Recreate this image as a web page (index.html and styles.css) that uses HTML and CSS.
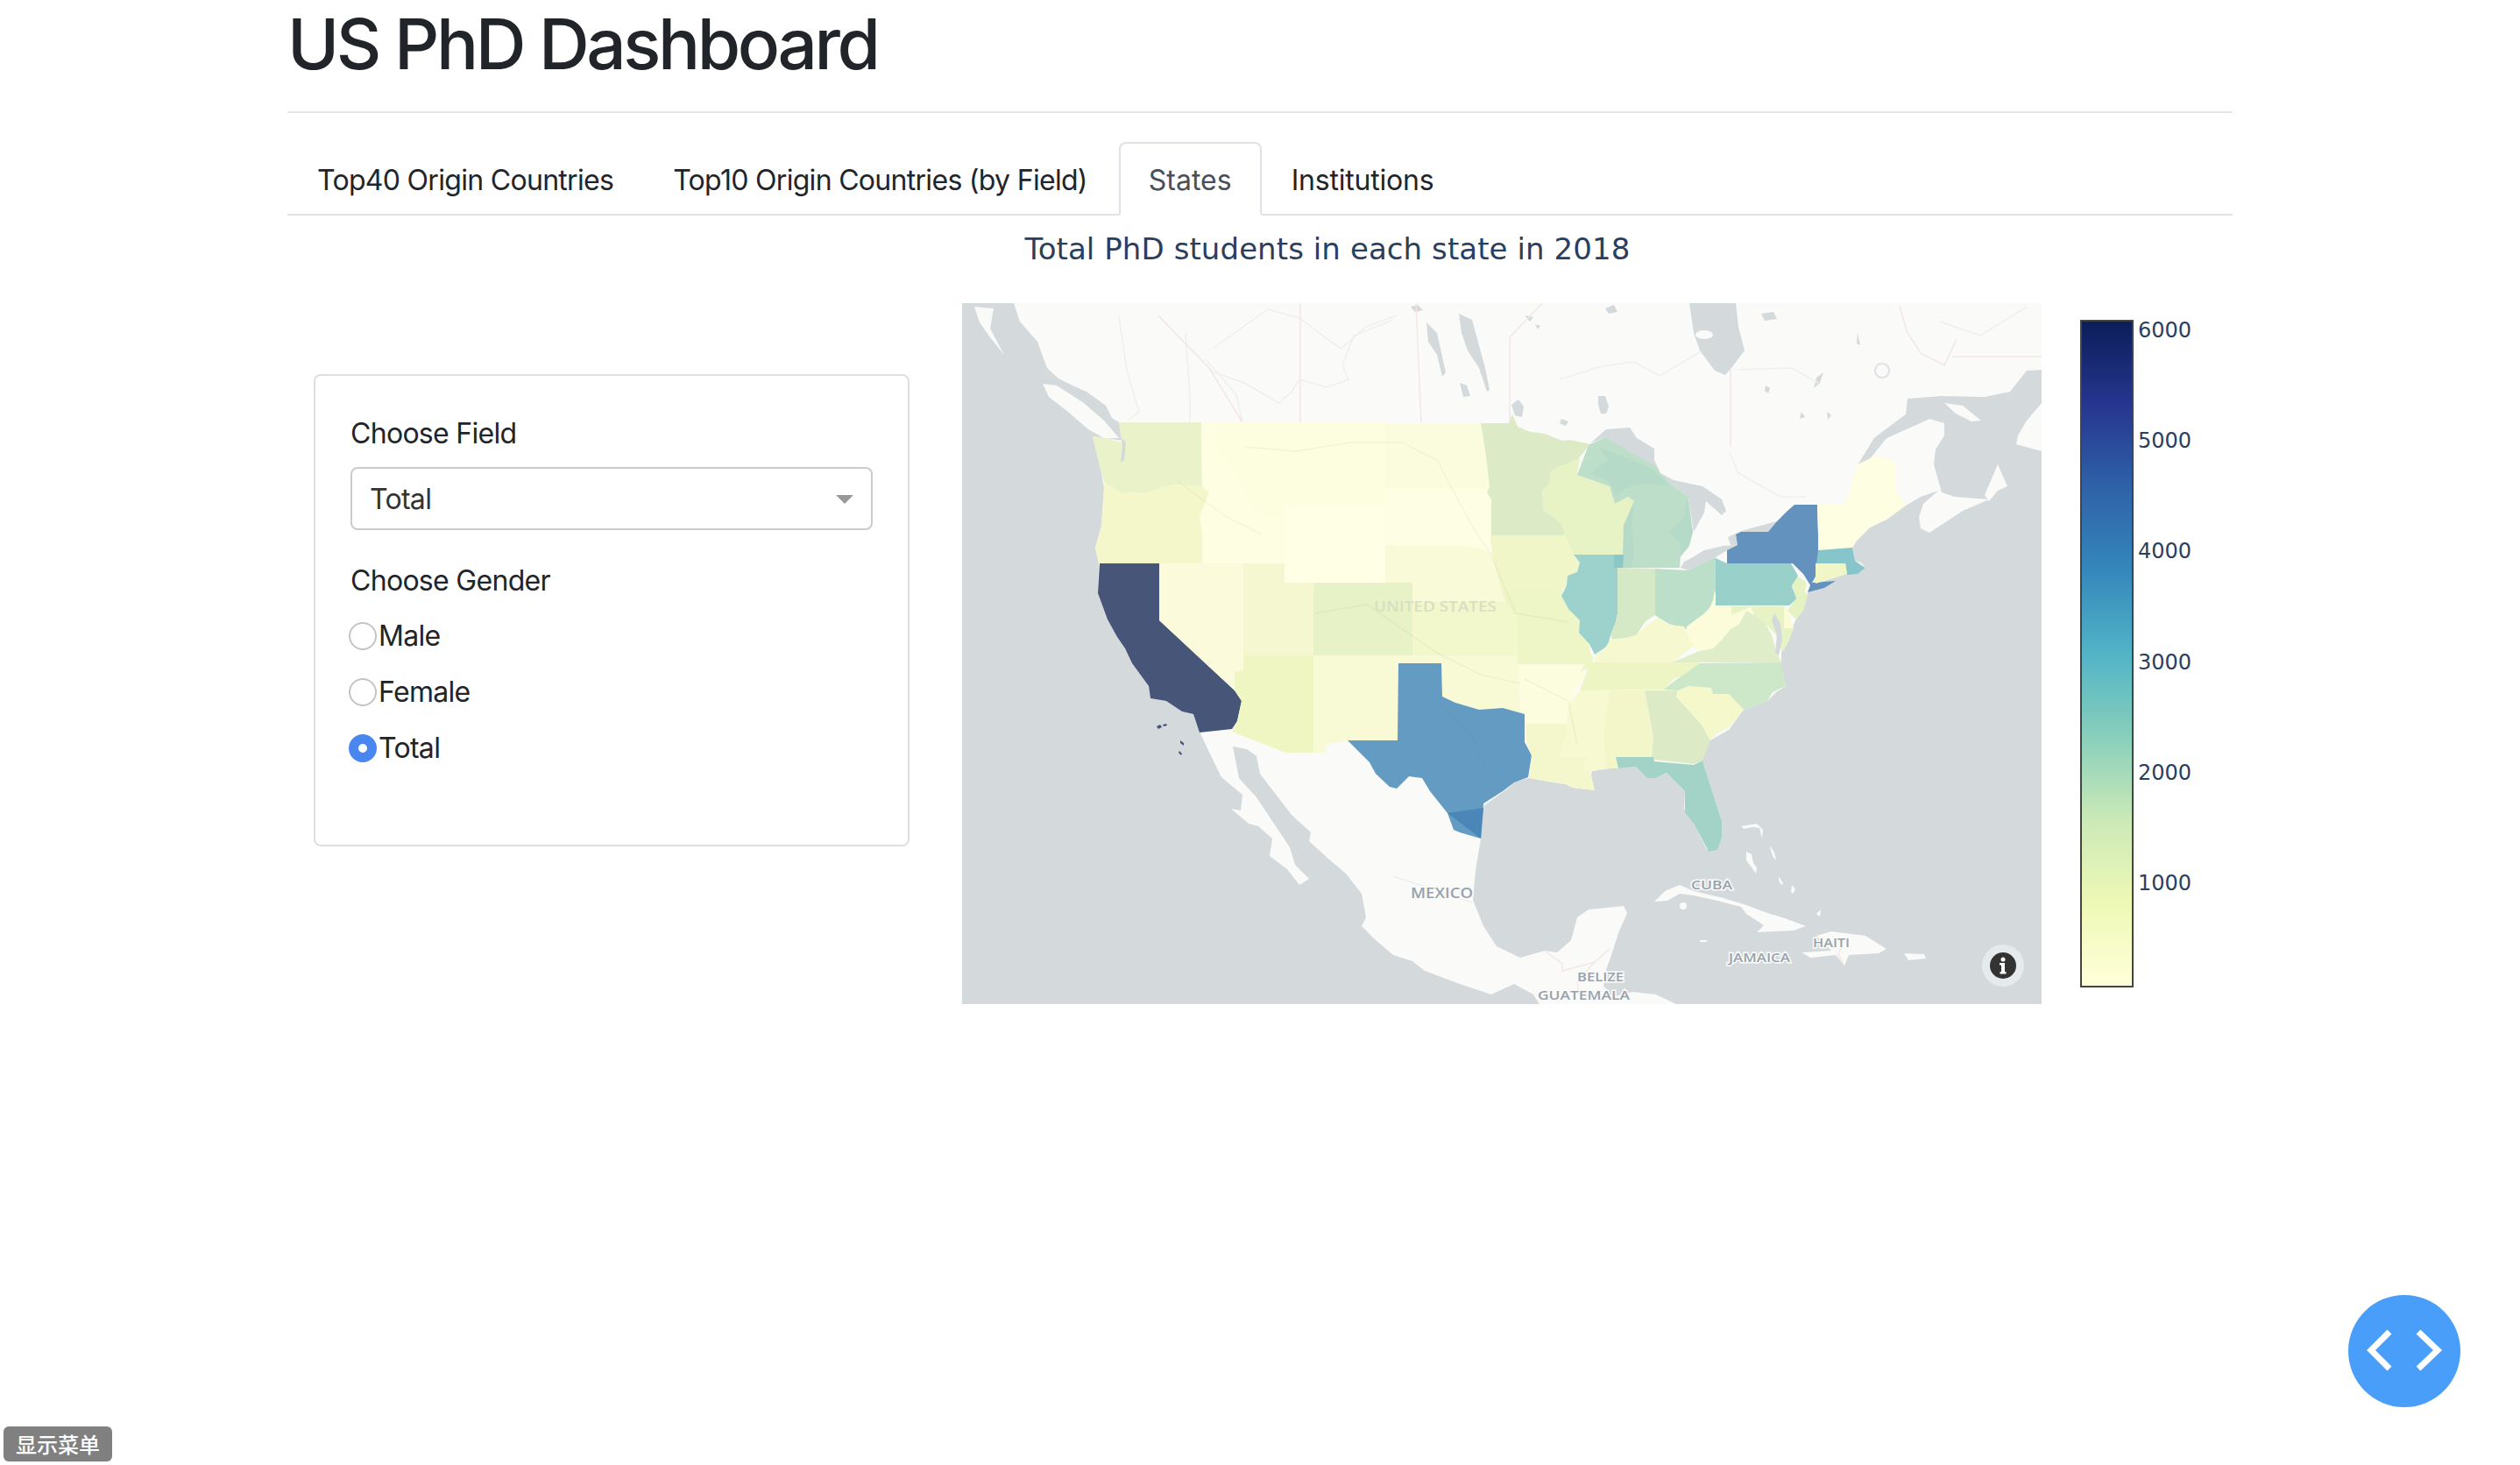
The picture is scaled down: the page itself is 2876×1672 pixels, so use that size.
FILE: index.html
```html
<!DOCTYPE html>
<html lang="en">
<head>
    <meta charset="UTF-8">
    <title>US PhD Dashboard</title>
    <link rel="stylesheet" href="styles.css">
</head>
<body>
    <div class="container">
        <h1 class="page-title">US PhD Dashboard</h1>
        <hr class="rule">

        <ul class="tabs">
            <li class="tab">Top40 Origin Countries</li>
            <li class="tab">Top10 Origin Countries (by Field)</li>
            <li class="tab active">States</li>
            <li class="tab last">Institutions</li>
        </ul>

        <div class="chart-title">Total PhD students in each state in 2018</div>

        <div class="states-row">
            <div class="card">
                <div class="card-label">Choose Field</div>
                <div class="select">
                    <span>Total</span>
                    <span class="select-arrow"></span>
                </div>
                <div class="card-label gender-label">Choose Gender</div>
                <label class="radio-row"><input type="radio" name="gender">Male</label>
                <label class="radio-row"><input type="radio" name="gender">Female</label>
                <label class="radio-row"><input type="radio" name="gender" checked>Total</label>
            </div>

            <svg class="map" viewBox="1098 346 1232 800" xmlns="http://www.w3.org/2000/svg">
                <rect class="water" x="1098" y="346" width="1232" height="800"/>

                <!-- land -->
                <g class="land">
                    <path d="M1157 346L1164 367 1184 390 1195 420 1208 432 1224 440 1240 447 1262 463 1269 477 1277 482 1282 503 1262 500 1247 498 1257 540 1260 557 1257 600 1250 625 1254 643 1253 677 1264 707 1275 727 1284 740 1292 757 1311 783 1313 797 1331 800 1349 812 1362 815 1369 835 1376 850 1387 873 1394 887 1418 907 1416 925 1405 923 1425 940 1436 943 1452 957 1449 977 1469 992 1483 1010 1494 1003 1478 987 1472 967 1456 943 1434 910 1414 888 1407 852 1423 855 1434 863 1438 883 1474 930 1496 950 1494 960 1516 980 1536 997 1554 1020 1559 1047 1554 1057 1570 1073 1590 1090 1612 1097 1626 1108 1666 1123 1702 1135 1728 1123 1750 1135 1757 1146 1913 1146 1890 1135 1863 1132 1840 1138 1830 1125 1833 1107 1840 1087 1847 1065 1857 1042 1853 1034 1813 1038 1800 1047 1793 1073 1777 1087 1763 1085 1735 1093 1708 1080 1693 1057 1681 1027 1684 993 1690 957 1690 930 1693 920 1707 910 1723 898 1728 892 1745 888 1767 892 1787 895 1795 899 1820 902 1815 888 1817 880 1837 877 1847 877 1867 875 1880 888 1890 888 1902 882 1923 903 1922 923 1933 940 1948 970 1960 970 1965 957 1965 937 1953 900 1943 868 1945 853 1952 845 1973 833 1990 810 2017 800 2027 790 2038 783 2033 757 2033 743 2047 713 2063 677 2072 666 2098 658 2108 655 2120 655 2129 648 2124 642 2117 640 2114 625 2119 617 2134 602 2153 593 2175 577 2192 567 2212 560 2195 575 2190 590 2192 603 2202 608 2240 583 2270 570 2231 567 2216 562 2207 530 2209 513 2219 497 2219 483 2202 478 2153 500 2119 533 2139 500 2175 473 2177 455 2216 452 2265 453 2294 447 2313 423 2330 422 2330 346Z"/>
                    <path d="M1112 350L1134 352 1130 375 1146 405 1130 385 1118 368Z"/>
                    <path d="M1190 438L1206 440 1237 460 1260 480 1277 500 1260 500 1242 490 1219 470 1197 453Z"/>
                    <path d="M2330 515L2301 507 2303 497 2313 480 2330 460Z"/>
                    <path d="M2265 565L2280 530 2291 555 2280 560 2270 572Z"/>
                    <path d="M2219 460L2240 463 2261 480 2250 481 2232 472Z"/>
                    <path d="M1888 1029L1900 1017 1917 1010 1933 1017 1967 1025 1993 1033 2017 1042 2037 1048 2061 1057 2047 1062 2005 1064 2013 1056 1993 1043 1987 1035 1960 1028 1933 1022 1917 1020 1903 1028Z"/>
                    <ellipse cx="1921" cy="1034" rx="4" ry="4"/>
                    <path d="M2056 1087L2090 1085 2073 1068 2090 1063 2129 1068 2153 1083 2144 1088 2110 1090 2105 1102 2095 1090 2066 1093Z"/>
                    <path d="M2173 1088L2196 1089 2198 1094 2178 1096Z"/>
                    <path d="M1993 972L1999 975 2001 985 2005 990 2004 997 1999 990 1993 982Z"/>
                    <path d="M1987 943L2005 940 2012 947 2011 957 2008 945 2000 944 1990 946Z"/>
                    <path d="M1940 1073h8v2h-8z"/>
                    <path d="M2073 1043L2078 1038 2077 1046Z"/>
                    <path d="M2020 965l5 8 2 8-3-2-3-8zM2045 1010l4 5-3 5-2-2zM2030 1000l5 8-2 2-3-5z"/>
                </g>

                <!-- lakes, bays and rivers mouths -->
                <g class="water">
                    <path d="M1928 346L1981 346 1984 373 1991 400 1976 420 1969 428 1957 423 1940 400 1933 380Z"/>
                    <path d="M1815 506L1833 490 1860 488 1868 500 1888 512 1888 525 1895 540 1860 520 1832 499Z"/>
                    <path d="M1895 540L1910 548 1943 555 1965 570 1970 583 1965 588 1947 572 1945 585 1933 607 1927 567 1910 555Z"/>
                    <path d="M1918 648L1927 651 1958 636 1971 628 1983 622 1967 623 1945 628 1930 637 1922 641Z"/>
                    <path d="M1972 613L1987 606 2020 597 2028 595 2018 608 1981 610 1983 622 1975 622Z"/>
                    <path d="M1665 358L1680 365 1695 420 1700 445 1697 447 1688 420 1675 400 1668 380Z"/>
                    <path d="M1666 437L1674 440 1678 452 1670 453Z"/>
                    <path d="M1628 368L1640 380 1650 425 1646 430 1640 405 1630 390Z"/>
                    <path d="M1725 462l8-6 6 8-2 12-8-2z"/>
                    <path d="M1824 452h8l4 12-3 8h-6l-3-10z"/>
                    <path d="M2070 443l3-12 8-6-4 12zM1610 350l8-2 6 6-9 2z"/>
                    <path d="M2119 533L2129 530 2153 500 2202 478 2175 473 2139 500Z"/>
                    <path d="M1782 478l8 3-3 5-7-3zM1740 360l10 2-4 5zM1752 370l6 2-3 4zM1832 352l10-4 4 8-10 2zM2010 358l14-2 4 8-14 2z"/>
                    <path d="M2120 380l3 14-4-2zM2056 470l4 6-6 2zM2015 440l5 3-2 6-4-3zM1965 400l3 6-4 2zM2085 470l5 4-4 5z"/>
                </g>
                <path class="lake-ring" d="M2148 415a8 8 0 1 0 .1 0"/>
                <ellipse class="land" cx="1945" cy="382" rx="10" ry="5"/>

                <!-- canadian rivers and borders -->
                <g class="river">
                    <polyline points="1277,360 1286,423 1300,470 1287,480"/>
                    <polyline points="1353,380 1358,453 1358,482"/>
                    <polyline points="1376,410 1411,450 1418,482"/>
                    <polyline points="1385,397 1447,353 1483,363 1530,398 1559,373 1594,360"/>
                    <polyline points="1380,423 1420,437 1460,460 1474,447 1483,433 1514,442 1539,433 1532,417 1545,383 1590,365"/>
                    <polyline points="1780,433 1828,418 1865,413 1894,429 1940,402"/>
                    <polyline points="1974,517 1984,540 2032,567 2061,567"/>
                    <polyline points="2214,367 2260,383 2313,350"/>
                    <polyline points="1985,422 2045,420 2075,437"/>
                    <polyline points="1590,1000 1680,1030"/>
                </g>
                <g class="border">
                    <polyline points="1484,346 1484,482"/>
                    <polyline points="1616,346 1622,482"/>
                    <polyline points="1723,482 1723,385 1760,346"/>
                    <polyline points="1322,360 1344,383 1380,420 1418,482"/>
                    <polyline points="1975,420 1975,510"/>
                    <polyline points="2168,350 2177,380 2192,403 2219,417 2233,387"/>
                    <polyline points="2228,407 2330,407"/>
                    <polyline points="1763,1085 1783,1100 1783,1108 1820,1098 1837,1083"/>
                    <polyline points="1820,1098 1800,1120 1802,1136"/>
                    <polyline points="2105,1070 2098,1090 2105,1102"/>
                </g>

                <!-- states -->
                <g class="states">
                    <path class="st-wa" d="M1277 482L1371 482 1372 555 1340 553 1309 562 1280 563 1260 550 1257 540 1247 498 1262 500 1280 505Z"/>
                    <path class="st-or" d="M1254 643L1372 643 1372 607 1369 590 1380 562 1372 555 1340 553 1309 562 1280 563 1260 550 1260 557 1257 600 1250 625Z"/>
                    <path class="st-ca" d="M1255 643L1323 643 1323 708 1409 788 1417 800 1412 823 1406 832 1369 836 1362 815 1349 812 1331 800 1313 797 1311 783 1292 757 1284 740 1275 727 1264 707 1253 677Z"/>
                    <path class="st-ca" d="M1320 829l4-2 2 3-4 2zM1327 827l4-1 1 2-4 1zM1347 845l4 3 0 3-4-3zM1346 857l3 3-1 2-3-3z"/>
                    <path class="st-id" d="M1371 482L1387 482 1387 507 1411 540 1429 580 1447 590 1466 587 1466 643 1372 643 1372 607 1369 590 1380 562 1372 555Z"/>
                    <path class="st-nv" d="M1323 643L1419 643 1419 765 1409 767 1409 788 1323 708Z"/>
                    <path class="st-ut" d="M1419 643L1466 643 1466 665 1499 665 1499 748 1419 748Z"/>
                    <path class="st-az" d="M1419 748L1499 748 1499 859 1467 859 1406 835 1412 823 1417 800 1409 788 1409 767 1419 765Z"/>
                    <path class="st-mt" d="M1387 482L1581 482 1581 577 1466 577 1466 587 1447 590 1429 580 1411 540 1387 507Z"/>
                    <path class="st-wy" d="M1466 577H1581V665H1466Z"/>
                    <path class="st-co" d="M1499 665H1612V748H1499Z"/>
                    <path class="st-nm" d="M1499 748L1596 748 1595 845 1538 845 1513 850 1513 859 1499 859Z"/>
                    <path class="st-nd" d="M1581 483L1690 483 1695 513 1700 555 1697 558 1581 557Z"/>
                    <path class="st-sd" d="M1581 557L1697 558 1697 562 1702 570 1702 611 1700 623 1703 632 1690 626 1665 623 1581 622Z"/>
                    <path class="st-ne" d="M1581 622L1665 623 1690 626 1703 632 1713 673 1718 687 1612 687 1612 665 1581 665Z"/>
                    <path class="st-ks" d="M1612 687L1718 687 1727 700 1732 705 1732 748 1612 748Z"/>
                    <path class="st-ok" d="M1596 748L1732 748 1733 758 1735 812 1740 815 1715 808 1688 810 1661 802 1646 795 1645 757 1596 757Z"/>
                    <path class="st-tx" d="M1596 757L1645 757 1646 795 1661 802 1688 810 1715 808 1740 815 1740 847 1748 862 1744 887 1728 893 1715 903 1693 917 1690 957 1666 950 1659 947 1652 928 1632 903 1623 888 1608 886 1594 900 1586 898 1570 883 1563 870 1538 845 1595 845Z"/>
                    <path class="st-tx-tip" d="M1652 928L1693 922 1690 957Z"/>
                    <path class="st-mn" d="M1690 483L1722 483 1726 473 1732 487 1747 493 1763 495 1783 503 1792 502 1815 507 1800 525 1770 538 1768 553 1760 560 1762 583 1783 598 1786 611 1702 611 1702 570 1697 562 1700 555 1695 513Z"/>
                    <path class="st-ia" d="M1701 611L1786 611 1796 633 1803 642 1800 653 1789 657 1788 668 1783 673 1713 673 1703 632Z"/>
                    <path class="st-mo" d="M1713 673L1783 673 1782 680 1790 695 1803 708 1802 722 1814 735 1815 745 1819 752 1813 763 1803 767 1808 758 1732 758 1732 705 1727 700 1718 687Z"/>
                    <path class="st-ar" d="M1733 758L1808 758 1803 767 1810 769 1800 785 1790 805 1788 826 1741 826 1741 815 1735 812Z"/>
                    <path class="st-la" d="M1741 826L1788 826 1788 835 1782 857 1780 864 1811 864 1806 878 1815 880 1820 902 1795 899 1787 895 1767 892 1745 888 1748 863 1742 845Z"/>
                    <path class="st-wi" d="M1770 538L1773 535 1803 523 1800 542 1837 555 1843 575 1858 567 1865 572 1853 600 1853 633 1796 633 1786 611 1783 598 1762 583 1760 560 1768 553Z"/>
                    <path class="st-mi" d="M1832 499L1890 533 1895 540 1910 555 1927 567 1932 607 1928 623 1918 635 1917 648 1852 648 1853 600 1865 572 1858 567 1847 573 1843 575 1837 555 1800 542 1813 508Z"/>
                    <path class="st-over-lake" d="M1825 510L1885 535 1905 555 1880 552 1860 555 1845 565 1837 550 1815 540 1835 525Z"/>
                    <path class="st-over-lake" d="M1865 572L1862 600 1865 630 1862 648 1852 648 1853 600Z"/>
                    <path class="st-over-lake" d="M1925 568L1932 607 1926 625 1918 635 1918 620 1905 608 1922 590Z"/>
                    <path class="st-il" d="M1796 633L1853 633 1852 648 1846 648 1846 700 1844 710 1838 725 1835 737 1820 747 1814 735 1802 722 1803 708 1790 695 1782 680 1788 668 1789 657 1800 653 1803 642Z"/>
                    <path class="st-il-lake" d="M1842 633H1853L1852 648H1842Z"/>
                    <path class="st-in" d="M1846 648L1889 649 1889 702 1878 709 1866 727 1840 730 1838 725 1844 710 1846 700Z"/>
                    <path class="st-oh" d="M1889 649L1927 651 1958 636 1958 675 1955 690 1940 705 1925 718 1905 712 1893 705 1889 702Z"/>
                    <path class="st-pa" d="M1958 637L1971 643 2044 643 2052 657 2045 670 2051 683 2042 691 1958 691Z"/>
                    <path class="st-ny" d="M2048 576L2074 576 2075 610 2075 650 2071 660 2068 665 2095 663 2082 671 2063 676 2066 668 2063 663 2058 655 2046 643 1971 643 1971 628 1983 622 1981 610 1987 607 2018 607 2028 595 2040 583Z"/>
                    <path class="st-ne-states" d="M2074 576L2103 576 2108 570 2120 530 2141 520 2163 527 2164 560 2175 577 2153 593 2134 602 2119 617 2114 625 2075 628 2075 610Z"/>
                    <path class="st-ma" d="M2075 628L2114 625 2117 640 2124 645 2129 648 2120 655 2108 656 2106 643 2073 643Z"/>
                    <path class="st-ct" d="M2072 643L2106 643 2108 655 2098 658 2072 666Z"/>
                    <path class="st-nj" d="M2052 658L2062 665 2060 675 2063 680 2058 697 2050 707 2040 697 2050 683 2045 668Z"/>
                    <path class="st-de" d="M2036 692L2041 697 2047 717 2036 717Z"/>
                    <path class="st-md" d="M1976 692L2036 692 2036 717 2047 717 2041 733 2034 745 2027 725 2015 712 2002 702 1998 693 1988 697 1976 702Z"/>
                    <path class="st-va" d="M1908 756L1940 743 1955 740 1965 730 1975 718 1985 712 1993 697 2002 702 2015 712 2022 725 2028 745 2033 756Z"/>
                    <path class="st-wv" d="M1957 673L1958 692 1976 692 1976 702 1988 697 1998 693 2002 702 1993 697 1985 712 1975 718 1965 730 1955 740 1938 743 1925 728 1925 715 1937 706 1950 697 1955 685Z"/>
                    <path class="st-ky" d="M1820 756L1822 746 1830 742 1838 730 1855 728 1867 725 1878 715 1892 705 1905 713 1922 715 1927 728 1933 737 1917 750 1908 756Z"/>
                    <path class="st-tn" d="M1815 756L1940 756 1930 767 1910 775 1898 787 1803 788 1810 770 1813 760Z"/>
                    <path class="st-ms" d="M1803 788L1837 788 1830 840 1833 877 1817 880 1806 878 1811 864 1780 864 1782 857 1788 835 1788 826 1790 805Z"/>
                    <path class="st-al" d="M1837 788L1877 788 1887 840 1885 864 1844 864 1847 877 1833 877 1830 840Z"/>
                    <path class="st-ga" d="M1877 788L1915 788 1913 795 1942 827 1952 845 1943 868 1933 872 1888 867 1885 864 1887 840Z"/>
                    <path class="st-sc" d="M1915 788L1927 783 1953 785 1955 792 1973 792 1990 810 1973 830 1958 838 1952 845 1942 827 1913 795Z"/>
                    <path class="st-nc" d="M1898 787L1917 773 1940 757 2033 756 2038 783 2023 790 2017 800 1990 810 1973 792 1955 792 1953 785 1927 783 1915 788Z"/>
                    <path class="st-fl" d="M1844 864L1887 864 1888 869 1933 873 1943 868 1953 900 1965 937 1965 957 1960 970 1950 972 1933 940 1923 927 1923 903 1902 882 1890 888 1880 888 1867 875 1847 877Z"/>
                </g>
                <path class="water" d="M2025 700L2032 712 2034 730 2030 748 2026 745 2028 725 2022 708ZM1280 500L1285 505 1283 525 1279 528 1281 510Z"/>

                <!-- rivers showing faintly through the states -->
                <g class="state-river">
                    <polyline points="1420,510 1480,515 1540,505 1600,505 1640,525 1680,600 1700,630 1730,700 1790,710"/>
                    <polyline points="1500,700 1560,690 1640,745 1690,770 1735,780"/>
                    <polyline points="1740,775 1790,800 1800,850"/>
                    <polyline points="1640,800 1680,840 1700,890"/>
                    <polyline points="1345,550 1400,590 1440,610"/>
                </g>

                <text class="map-label country-faint" x="1568" y="698" textLength="140" lengthAdjust="spacingAndGlyphs">UNITED STATES</text>
                <text class="map-label" x="1610" y="1025" textLength="71" lengthAdjust="spacingAndGlyphs">MEXICO</text>
                <text class="map-label small" x="1930" y="1015" textLength="47" lengthAdjust="spacingAndGlyphs">CUBA</text>
                <text class="map-label small" x="1800" y="1120" textLength="53" lengthAdjust="spacingAndGlyphs">BELIZE</text>
                <text class="map-label small" x="1755" y="1141" textLength="105" lengthAdjust="spacingAndGlyphs">GUATEMALA</text>
                <text class="map-label small" x="1973" y="1098" textLength="70" lengthAdjust="spacingAndGlyphs">JAMAICA</text>
                <text class="map-label small" x="2069" y="1081" textLength="42" lengthAdjust="spacingAndGlyphs">HAITI</text>

                <!-- mapbox info button -->
                <circle class="info-bg" cx="2286" cy="1102" r="24"/>
                <circle class="info-dot" cx="2286" cy="1102" r="15"/>
                <circle class="info-i" cx="2286" cy="1095" r="2.5"/>
                <path class="info-i" d="M2282 1099h6v10h1.5v2.5h-7v-2.5h1.500v-7.500h-2z"/>
            </svg>

            <div class="colorbar">
                <div class="colorbar-ramp"></div>
                <ul class="colorbar-ticks">
                    <li>6000</li>
                    <li>5000</li>
                    <li>4000</li>
                    <li>3000</li>
                    <li>2000</li>
                    <li>1000</li>
                </ul>
            </div>
        </div>
    </div>

    <div class="menu-badge">显示菜单</div>

    <button class="code-fab" aria-label="code">
        <svg viewBox="0 0 128 128" xmlns="http://www.w3.org/2000/svg">
            <path d="M47 42L26 63 47 84"/>
            <path d="M80 42L102 63 80 84"/>
        </svg>
    </button>
</body>
</html>
```

FILE: styles.css
```css
* {
    box-sizing: border-box;
}

body {
    margin: 0;
    font-family: Inter, "Liberation Sans", sans-serif;
    font-size: 32px;
    line-height: 48px;
    letter-spacing: -0.7px;
    color: #212529;
    background-color: #fff;
    overflow: hidden;
}

.container {
    width: 2280px;
    margin: 0 auto;
    padding: 0 30px;
}

.page-title {
    height: 96px;
    margin: -1px 0 0;
    font-size: 80px;
    font-weight: 500;
    line-height: 102px;
    letter-spacing: -3.4px;
}

.rule {
    margin: 32px 0 33px;
    height: 2px;
    border: none;
    background-color: #e5e5e5;
}

.tabs {
    display: flex;
    margin: 0;
    padding: 0;
    list-style: none;
    border-bottom: 2px solid #dee2e6;
}

.tab {
    padding: 18px 32px 14px;
    margin-bottom: -2px;
    border: 2px solid transparent;
    border-radius: 8px 8px 0 0;
}

.tab.active {
    margin-left: 2px;
    color: #495057;
    background-color: #fff;
    border-color: #dee2e6 #dee2e6 #fff;
    letter-spacing: 0;
}

.tab.last {
    letter-spacing: -0.2px;
}

.chart-title {
    padding-left: 154px;
    height: 76px;
    font-family: "DejaVu Sans", Verdana, sans-serif;
    font-size: 34px;
    line-height: 76px;
    letter-spacing: 0.08px;
    text-align: center;
    color: #2a3f5f;
}

.states-row {
    display: flex;
    align-items: flex-start;
    margin-top: 24px;
    padding-left: 30px;
}

.card {
    width: 680px;
    height: 539px;
    margin-top: 81px;
    margin-right: 60px;
    padding: 40px;
    border: 2px solid #dfdfdf;
    border-radius: 8px;
}

.card-label {
    height: 48px;
    line-height: 52px;
}

.select {
    display: flex;
    align-items: center;
    justify-content: space-between;
    height: 72px;
    margin-top: 16px;
    padding: 2px 20px 0 20px;
    border: 2px solid #ccc;
    border-radius: 8px;
    color: #333;
}

.select-arrow {
    width: 0;
    height: 0;
    border-left: 10px solid transparent;
    border-right: 10px solid transparent;
    border-top: 10px solid #999;
}

.gender-label {
    margin-top: 32px;
}

.radio-row {
    display: flex;
    align-items: center;
    height: 64px;
    margin-left: -2px;
}

.gender-label + .radio-row {
    margin-top: 9px;
}

.radio-row input {
    appearance: none;
    width: 32px;
    height: 32px;
    margin: 0 2px 0 0;
    border: 2px solid #c4c4c4;
    border-radius: 50%;
    background-color: #fff;
}

.radio-row input:checked {
    border: 11px solid #4a86f0;
}

.map {
    display: block;
    width: 1232px;
    height: 800px;
    flex: none;
}

.water {
    fill: #d4d9dc;
}

.land {
    fill: #fafaf8;
}

.lake-ring {
    fill: none;
    stroke: #dfe2e4;
    stroke-width: 2;
}

.river {
    fill: none;
    stroke: #efefed;
    stroke-width: 1.5;
}

.border {
    fill: none;
    stroke: #f3e6e6;
    stroke-width: 1.5;
}

.state-river {
    fill: none;
    stroke: rgba(110, 130, 90, 0.07);
    stroke-width: 1.5;
}

.map-label {
    font-family: "Open Sans", sans-serif;
    font-size: 17px;
    font-weight: 600;
    letter-spacing: 0;
    fill: #98a2ac;
    stroke: #fafaf8;
    stroke-width: 3px;
    paint-order: stroke;
}

.map-label.small {
    font-size: 15px;
}

.country-faint {
    fill: #d8dfc2;
    stroke: none;
}

.st-wa { fill: #e9f2c8; }
.st-or { fill: #f4f7ca; }
.st-ca { fill: #475579; }
.st-id { fill: #feffe2; }
.st-nv { fill: #fbfbdb; }
.st-ut { fill: #f5f7d0; }
.st-az { fill: #f0f6c2; }
.st-mt { fill: #fdfde0; }
.st-wy { fill: #feffe4; }
.st-co { fill: #e8f2c7; }
.st-nm { fill: #f8fad5; }
.st-nd { fill: #fbfcdd; }
.st-sd { fill: #fefee5; }
.st-ne { fill: #f9fad7; }
.st-ks { fill: #f2f7cc; }
.st-ok { fill: #f8fad5; }
.st-tx { fill: #639bc3; }
.st-tx-tip { fill: #4a87b8; }
.st-mn { fill: #dcebc6; }
.st-ia { fill: #f0f6c7; }
.st-mo { fill: #eef5c6; }
.st-ar { fill: #fcfddf; }
.st-la { fill: #f4f7cc; }
.st-wi { fill: #e7f2c5; }
.st-mi { fill: #bddfc9; }
.st-over-lake { fill: #b5dac7; }
.st-il { fill: #9dd1cb; }
.st-il-lake { fill: #8bc7c7; }
.st-in { fill: #d5e9c7; }
.st-oh { fill: #bcdfc9; }
.st-pa { fill: #9ad0ca; }
.st-ny { fill: #6392be; }
.st-ne-states { fill: #fefee2; }
.st-ma { fill: #86c5c9; }
.st-ct { fill: #f0f6c6; }
.st-nj { fill: #e7f2c3; }
.st-de { fill: #fbfbd5; }
.st-md { fill: #e7f2c5; }
.st-va { fill: #dfeec8; }
.st-wv { fill: #fcfcdb; }
.st-ky { fill: #f6f8cf; }
.st-tn { fill: #edf5c4; }
.st-ms { fill: #f7f9d0; }
.st-al { fill: #f2f6c8; }
.st-ga { fill: #dcebc6; }
.st-sc { fill: #f5f8cb; }
.st-nc { fill: #cde7c9; }
.st-fl { fill: #a3d3c6; }

.info-bg {
    fill: #e7eaec;
}

.info-dot {
    fill: #333;
}

.info-i {
    fill: #fff;
}

.colorbar {
    display: flex;
    flex: none;
    margin-left: 44px;
    margin-top: 19px;
}

.colorbar-ramp {
    width: 61px;
    height: 762px;
    border: 2px solid #444;
    background: linear-gradient(to top, #ffffd9 0%, #eef8b6 12.5%, #cbe9b6 25%, #88cfbb 37.5%, #52b4c6 50%, #3487bb 62.5%, #2f62a8 75%, #26358f 87.5%, #0c1e59 100%);
}

.colorbar-ticks {
    margin: 0 0 0 5px;
    padding: 0;
    list-style: none;
    font-family: "DejaVu Sans", Verdana, sans-serif;
    font-size: 24px;
    line-height: 24px;
    letter-spacing: 0;
    color: #2a3f5f;
}

.colorbar-ticks li {
    height: 126.2px;
}

.menu-badge {
    position: fixed;
    left: 4px;
    bottom: 4px;
    width: 124px;
    height: 40px;
    border-radius: 6px;
    background-color: #808080;
    color: #fff;
    font-family: "Noto Sans CJK SC", sans-serif;
    font-size: 24px;
    font-weight: 500;
    line-height: 40px;
    letter-spacing: 0;
    text-align: center;
}

.code-fab {
    position: fixed;
    right: 68px;
    bottom: 66px;
    width: 128px;
    height: 128px;
    padding: 0;
    border: none;
    border-radius: 50%;
    background-color: #489ef8;
}

.code-fab svg {
    display: block;
    width: 128px;
    height: 128px;
}

.code-fab path {
    fill: none;
    stroke: #fff;
    stroke-width: 7;
}
```
